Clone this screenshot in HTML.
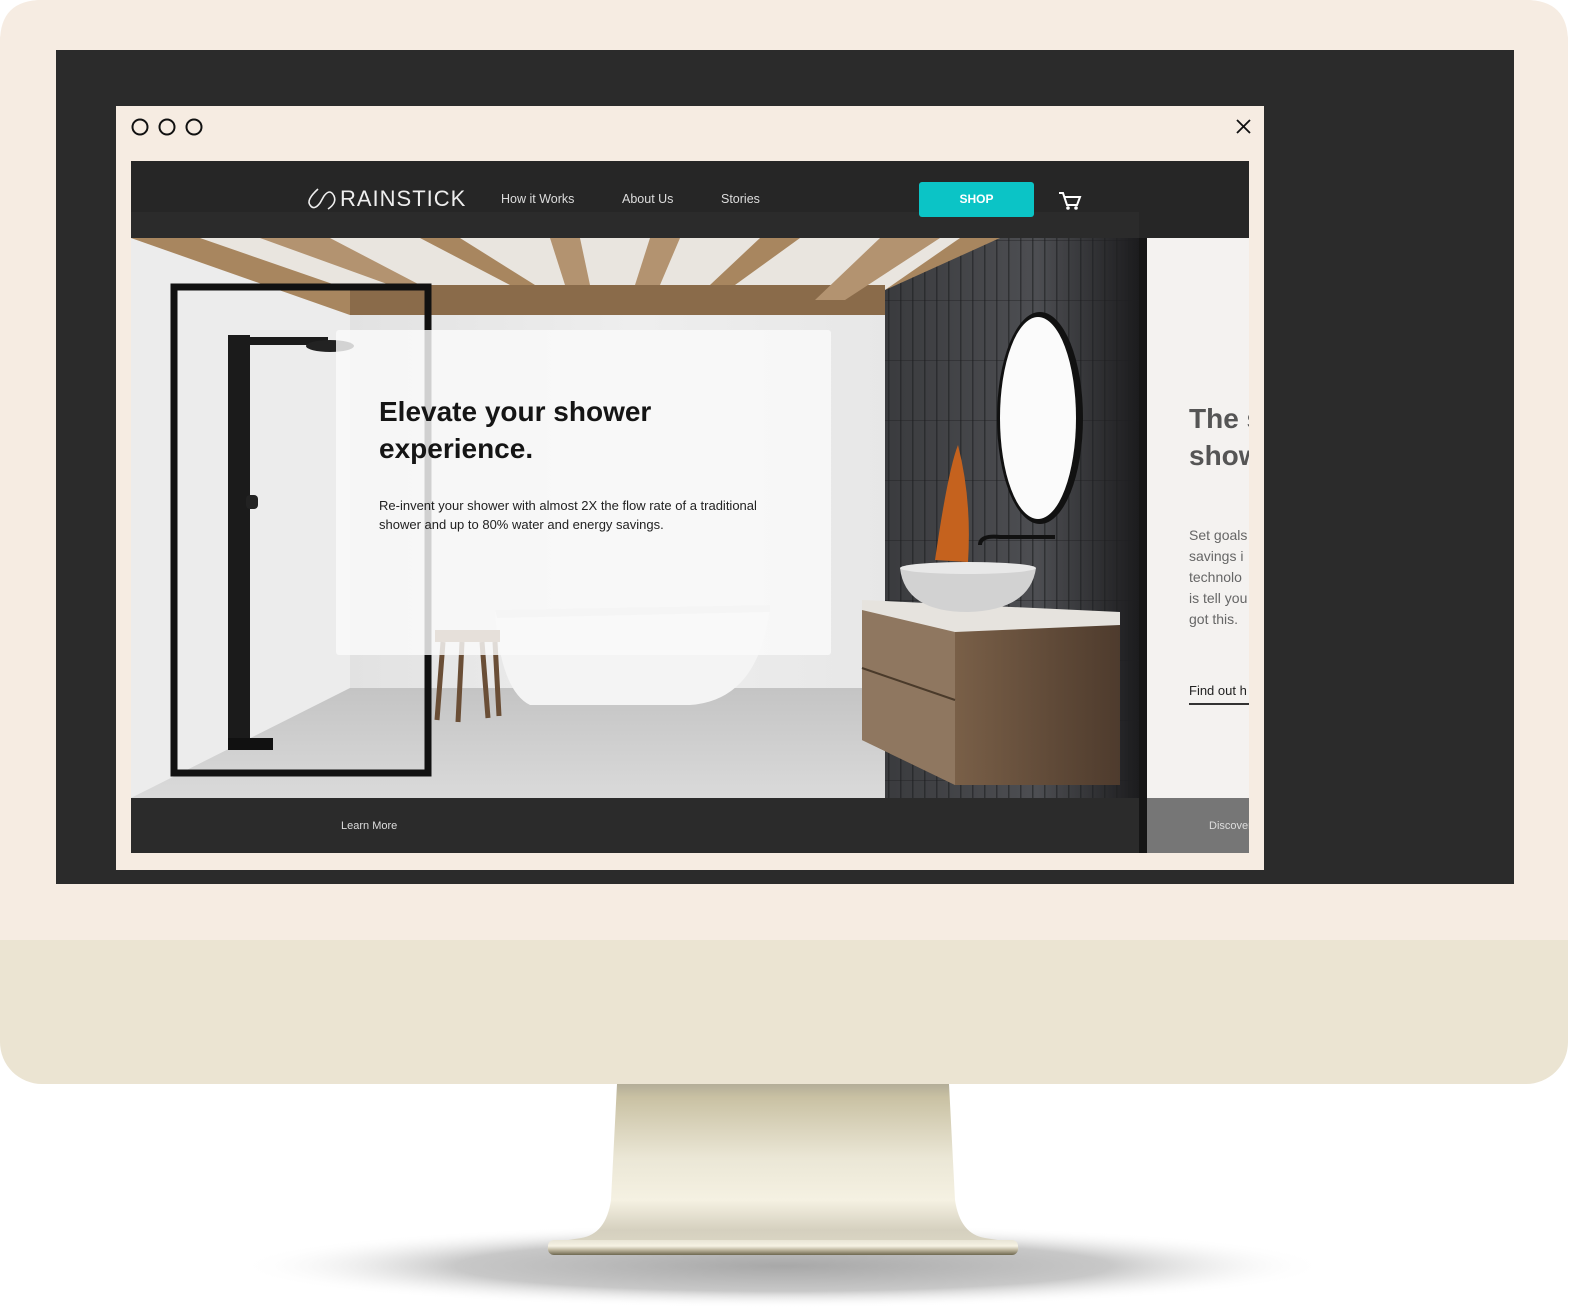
<!DOCTYPE html>
<html><head><meta charset="utf-8"><style>
*{margin:0;padding:0;box-sizing:border-box}
body{width:1576px;height:1314px;background:#fff;position:relative;overflow:hidden;font-family:"Liberation Sans",sans-serif}
.a{position:absolute}
</style></head><body>
<svg class="a" style="left:0;top:0" width="1576" height="1314" viewBox="0 0 1576 1314">
<defs>
<radialGradient id="sh" cx="0.5" cy="0.5" r="0.5"><stop offset="0" stop-color="#a8a8a8"/><stop offset="0.6" stop-color="#c8c8c8"/><stop offset="1" stop-color="#fff" stop-opacity="0"/></radialGradient>
<linearGradient id="st" x1="0" y1="0" x2="0" y2="1"><stop offset="0" stop-color="#b3ad98"/><stop offset="0.08" stop-color="#c9c1a3"/><stop offset="0.45" stop-color="#ebe7d6"/><stop offset="0.7" stop-color="#f5f1e2"/><stop offset="0.88" stop-color="#d5d0bf"/><stop offset="1" stop-color="#ddd8c6"/></linearGradient>
<linearGradient id="bs" x1="0" y1="0" x2="0" y2="1"><stop offset="0" stop-color="#e9e5d6"/><stop offset="0.4" stop-color="#f6f2e4"/><stop offset="0.7" stop-color="#b5ad95"/><stop offset="1" stop-color="#6e6850"/></linearGradient>
<linearGradient id="wall" x1="0" y1="0" x2="1" y2="0"><stop offset="0" stop-color="#d9d9d9"/><stop offset="0.5" stop-color="#eeeeee"/><stop offset="1" stop-color="#e0e0e0"/></linearGradient>
<linearGradient id="tile" x1="0" y1="0" x2="1" y2="0"><stop offset="0" stop-color="#3a3b3e"/><stop offset="0.6" stop-color="#4d4e52"/><stop offset="1" stop-color="#1c1c1e"/></linearGradient>
<linearGradient id="flr" x1="0" y1="0" x2="0" y2="1"><stop offset="0" stop-color="#c4c4c4"/><stop offset="1" stop-color="#dadada"/></linearGradient>
<linearGradient id="wood" x1="0" y1="0" x2="1" y2="0"><stop offset="0" stop-color="#8d7458"/><stop offset="0.35" stop-color="#7a6048"/><stop offset="1" stop-color="#4e3b2d"/></linearGradient>
<pattern id="tl" width="12" height="60" patternUnits="userSpaceOnUse"><rect x="0" width="1.5" height="60" fill="#1e1f21" opacity=".6"/><rect y="0" width="12" height="1" fill="#1e1f21" opacity=".4"/></pattern>
</defs>
<ellipse cx="783" cy="1266" rx="545" ry="42" fill="url(#sh)"/>
<path d="M617 1084 L949 1084 L955 1200 Q960 1234 985 1238 L1010 1242 Q1020 1244 1018 1250 L548 1250 Q546 1244 556 1242 L581 1238 Q606 1234 611 1200 Z" fill="url(#st)"/>
<rect x="548" y="1240" width="470" height="15" rx="6" fill="url(#bs)"/>
<rect x="0" y="0" width="1568" height="1084" rx="42" fill="#ebe4d2"/>
<path d="M42 0 H1526 Q1568 0 1568 42 V940 H0 V42 Q0 0 42 0Z" fill="#f6ece2"/>
<rect x="56" y="50" width="1458" height="834" fill="#2b2b2b"/>
<rect x="116" y="106" width="1148" height="764" fill="#f6ece2"/>
<circle cx="140" cy="127" r="7.5" fill="none" stroke="#111" stroke-width="2"/>
<circle cx="167" cy="127" r="7.5" fill="none" stroke="#111" stroke-width="2"/>
<circle cx="194" cy="127" r="7.5" fill="none" stroke="#111" stroke-width="2"/>
<path d="M1237 120 L1250 133 M1250 120 L1237 133" stroke="#111" stroke-width="1.8"/>
<rect x="131" y="161" width="1118" height="692" fill="#262626"/>
<rect x="131" y="238" width="1008" height="560" fill="url(#wall)"/>
<polygon points="131,238 350,315 350,690 131,798" fill="#ececec"/>
<!-- ceiling -->
<polygon points="131,238 1000,238 885,315 350,315" fill="#e9e5df"/>
<polygon points="350,285 885,285 885,315 350,315" fill="#8a6b4a"/>
<polygon points="131,238 200,238 350,290 350,315" fill="#a8865f"/>
<polygon points="260,238 330,238 420,285 390,285" fill="#b39370"/>
<polygon points="420,238 460,238 535,285 510,285" fill="#a8865f"/>
<polygon points="550,238 580,238 590,285 565,285" fill="#b39370"/>
<polygon points="650,238 680,238 660,285 635,285" fill="#b39370"/>
<polygon points="760,238 800,238 735,285 710,285" fill="#a8865f"/>
<polygon points="880,238 940,238 845,300 815,300" fill="#b39370"/>
<polygon points="960,238 1000,238 885,315 885,290" fill="#a8865f"/>
<polygon points="350,688 885,688 1139,740 1139,798 131,798" fill="url(#flr)"/>
<polygon points="885,290 1000,238 1139,238 1139,798 885,798" fill="url(#tile)"/>
<polygon points="885,290 1000,238 1139,238 1139,798 885,798" fill="url(#tl)"/>
<ellipse cx="1040" cy="418" rx="43" ry="106" fill="#111"/>
<ellipse cx="1038" cy="418" rx="38" ry="101" fill="#fbfbfb"/>
<path d="M958 445 Q948 470 935 560 L968 562 Q972 500 958 445Z" fill="#c5621e"/>
<path d="M980 545 Q980 535 1000 537 L1055 537" stroke="#111" stroke-width="4" fill="none"/>
<polygon points="862,603 1120,615 1120,785 955,785 862,740" fill="url(#wood)"/>
<polygon points="862,603 955,615 955,785 862,740" fill="#8f7760"/>
<line x1="862" y1="668" x2="955" y2="700" stroke="#4a3a2a" stroke-width="2"/>
<polygon points="862,600 1120,612 1120,625 955,632 862,610" fill="#e6e3de"/>
<path d="M900 568 Q905 612 968 612 Q1030 610 1036 568Z" fill="#d2d2d2"/>
<ellipse cx="968" cy="568" rx="68" ry="6" fill="#e8e8e8"/>
<path d="M495 610 L770 605 Q760 700 690 705 L530 705 Q500 690 495 610Z" fill="#f4f4f4"/>
<path d="M495 610 L770 605 L770 612 L497 618Z" fill="#dedede"/>
<rect x="435" y="630" width="65" height="12" fill="#8a6b4a"/>
<path d="M443 642 L437 720 M462 642 L458 722 M482 642 L488 718 M495 642 L499 716" stroke="#6a4e36" stroke-width="5"/>
<rect x="174" y="287" width="254" height="486" fill="none" stroke="#111" stroke-width="7"/>
<rect x="228" y="335" width="22" height="412" fill="#1b1b1b"/>
<rect x="228" y="337" width="100" height="8" fill="#1b1b1b"/>
<ellipse cx="330" cy="346" rx="24" ry="6" fill="#222"/>
<rect x="246" y="495" width="12" height="14" rx="4" fill="#222"/>
<rect x="228" y="738" width="45" height="12" fill="#111"/>
<rect x="131" y="161" width="1118" height="77" fill="#262626"/>
<rect x="131" y="212" width="1008" height="26" fill="#2e2e2e" opacity=".6"/>
<rect x="131" y="798" width="1008" height="55" fill="#2b2b2b"/>
<rect x="1139" y="238" width="110" height="560" fill="#f4f2f0"/>
<rect x="1139" y="238" width="8" height="615" fill="#161616"/>
<rect x="1147" y="798" width="102" height="55" fill="#767676"/>
<rect x="1189" y="703" width="60" height="2" fill="#333"/>
<rect x="336" y="330" width="495" height="325" rx="3" fill="#fafafa" opacity=".82"/>
<path d="M318 189 Q306 200 310 205 Q314 211 320 203 L324 196 Q330 188 334 196 Q337 203 328 209" fill="none" stroke="#eee" stroke-width="1.6"/>
<path d="M1059 193 L1063 193 L1067 205 L1077 205 L1080 197 L1065 197" fill="none" stroke="#fff" stroke-width="2"/>
<circle cx="1068" cy="208" r="1.8" fill="#fff"/><circle cx="1076" cy="208" r="1.8" fill="#fff"/>
</svg>
<div class="a" style="left:340px;top:186px;color:#eee;font-size:22px;letter-spacing:1px">RAINSTICK</div>
<div class="a" style="left:501px;top:192px;color:#ddd;font-size:12.5px">How it Works</div>
<div class="a" style="left:622px;top:192px;color:#ddd;font-size:12.5px">About Us</div>
<div class="a" style="left:721px;top:192px;color:#ddd;font-size:12.5px">Stories</div>
<div class="a" style="left:919px;top:182px;width:115px;height:35px;background:#0bc4c6;border-radius:3px;color:#fff;font-size:12px;font-weight:bold;text-align:center;line-height:35px">SHOP</div>
<div class="a" style="left:379px;top:393px;color:#151515;font-size:28px;font-weight:bold;line-height:37px">Elevate your shower<br>experience.</div>
<div class="a" style="left:379px;top:496px;color:#222;font-size:13px;line-height:19px">Re-invent your shower with almost 2X the flow rate of a traditional<br>shower and up to 80% water and energy savings.</div>
<div class="a" style="left:341px;top:820px;color:#ddd;font-size:11px">Learn More</div>
<div class="a" style="left:1189px;top:400px;width:60px;overflow:hidden;white-space:nowrap;color:#555;font-size:28px;font-weight:bold;line-height:37px">The s<br>show</div>
<div class="a" style="left:1189px;top:525px;width:60px;overflow:hidden;white-space:nowrap;color:#666;font-size:14px;line-height:21px">Set goals<br>savings i<br>technolo<br>is tell you<br>got this.</div>
<div class="a" style="left:1189px;top:683px;width:60px;overflow:hidden;white-space:nowrap;color:#222;font-size:13px">Find out h</div>
<div class="a" style="left:1209px;top:820px;width:40px;overflow:hidden;white-space:nowrap;color:#ddd;font-size:11px">Discover</div>
</body></html>
